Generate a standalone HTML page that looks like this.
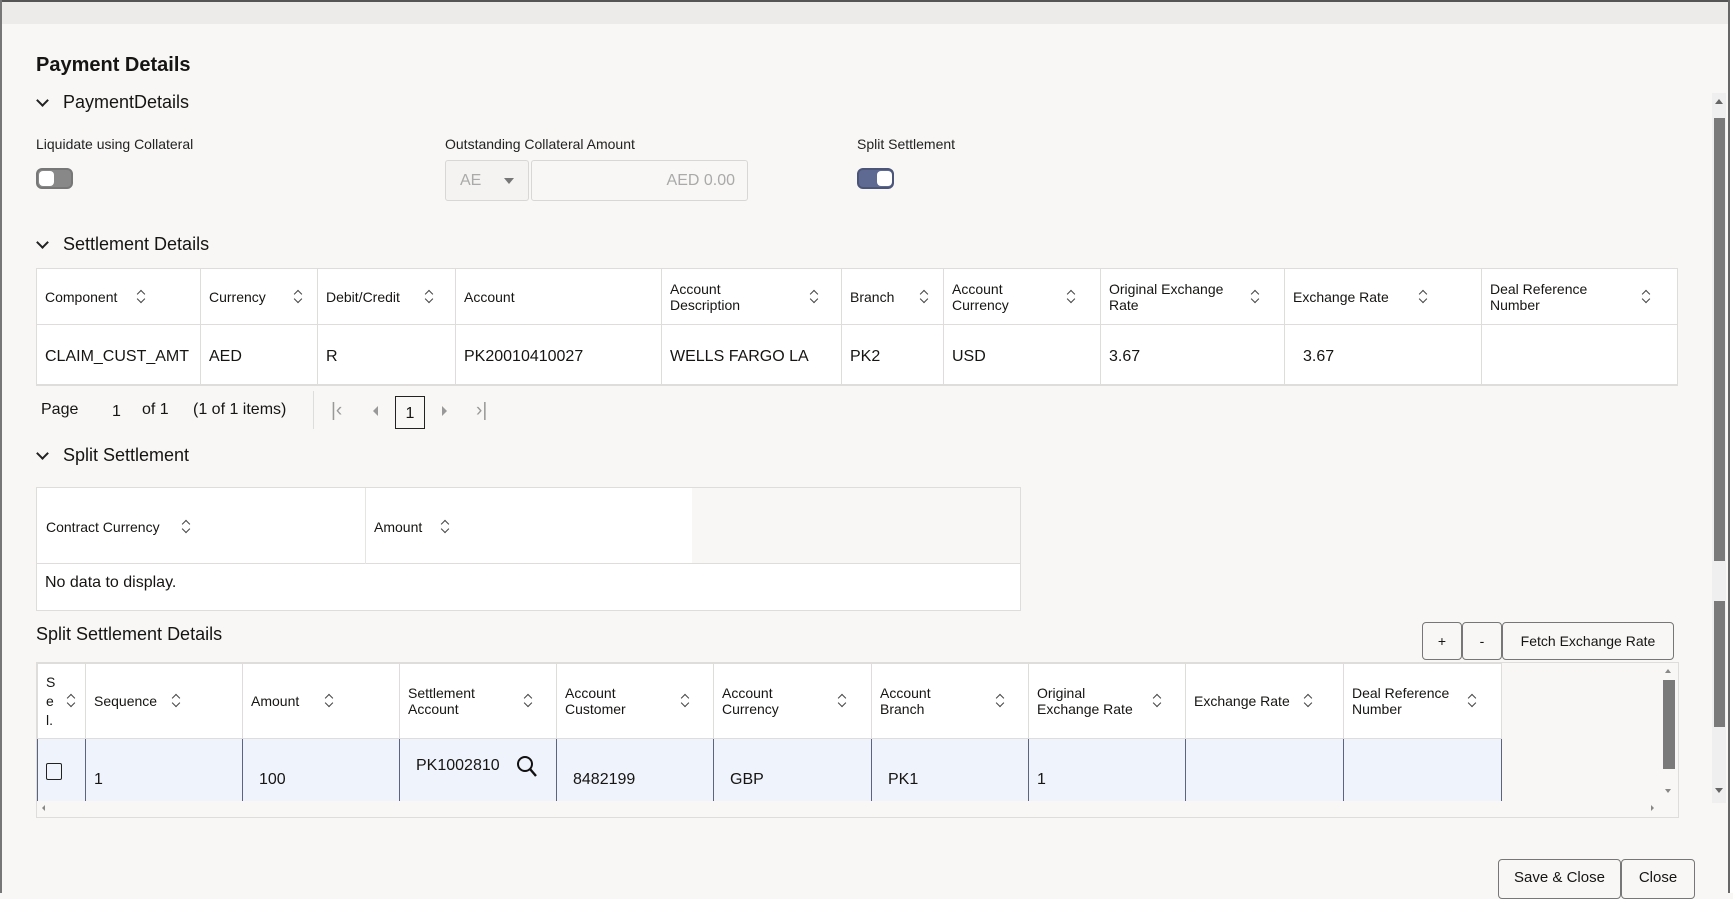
<!DOCTYPE html>
<html><head><meta charset="utf-8">
<style>
*{box-sizing:border-box;margin:0;padding:0}
body{width:1733px;height:893px;overflow:hidden;background:#f8f7f5;font-family:"Liberation Sans",sans-serif;color:#161513;position:relative}
.a{position:absolute;white-space:nowrap}
.top{left:0;top:0;width:1733px;height:24px;background:#ecebea;border-top:2px solid #555}
.lb{left:0;top:0;width:2px;height:893px;background:#777}
.rb{left:1728px;top:0;width:5px;height:893px;background:#fff;border-left:2px solid #666}
.h1{font-size:20px;font-weight:bold;left:36px;top:54px}
.sec{font-size:18px;left:63px}
.chev{left:38px;width:9px;height:9px;border-right:2px solid #222;border-bottom:2px solid #222;transform:rotate(45deg)}
.lab{font-size:14px;top:136px;color:#222}
.tog{width:37px;height:21px;border-radius:6px;border:2px solid #777;background:#888}
.tog i{position:absolute;left:1px;top:1px;width:15px;height:15px;background:#fff;border-radius:4px}
table{border-collapse:collapse;position:absolute;table-layout:fixed}
td,th{border:1px solid #dedddb;font-weight:normal;text-align:left;font-size:14px;vertical-align:middle;padding:0 8px;position:relative;background:#fff}
td{font-size:16px}
.s{display:inline-block;width:8px;height:12px;position:absolute;top:50%;margin-top:-7px}
.s:before,.s:after{content:"";position:absolute;left:1px;width:5px;height:5px;border-left:1.3px solid #444;border-top:1.3px solid #444}
.s:before{top:1px;transform:rotate(45deg)}
.s:after{top:6px;transform:rotate(225deg)}
.btn{border:1px solid #777;border-radius:4px;background:#f8f7f5;font-size:14px;text-align:center;height:38px;line-height:36px}
.dr td{background:#eff3fc;border-left:1px solid #5b6480;border-right:1px solid #5b6480;border-top:1px solid #dedddb;border-bottom:none}
</style></head><body>
<div class="a top"></div>
<div class="a lb"></div>
<div class="a rb"></div>
<div class="a" style="left:1712px;top:93px;width:14px;height:710px;background:#efefef"></div>
<div class="a" style="left:1714px;top:118px;width:11px;height:443px;background:#7a7a7a"></div>
<div class="a" style="left:1714px;top:601px;width:11px;height:126px;background:#7a7a7a"></div>
<div class="a" style="left:1715px;top:99px;border-left:4px solid transparent;border-right:4px solid transparent;border-bottom:5px solid #666"></div>
<div class="a" style="left:1715px;top:788px;border-left:4px solid transparent;border-right:4px solid transparent;border-top:5px solid #666"></div>

<div class="a h1">Payment Details</div>
<div class="a chev" style="top:96px"></div><div class="a sec" style="top:92px">PaymentDetails</div>
<div class="a lab" style="left:36px">Liquidate using Collateral</div>
<div class="a lab" style="left:445px">Outstanding Collateral Amount</div>
<div class="a lab" style="left:857px">Split Settlement</div>
<div class="a tog" style="left:36px;top:168px"><i></i></div>
<div class="a" style="left:445px;top:160px;width:84px;height:41px;border:1px solid #d8d7d5;border-radius:3px;background:#f4f3f1;font-size:16px;color:#aaa;line-height:39px;padding-left:14px">AE<span style="position:absolute;left:58px;top:17px;border-left:5px solid transparent;border-right:5px solid transparent;border-top:6px solid #777"></span></div>
<div class="a" style="left:531px;top:160px;width:217px;height:41px;border:1px solid #d8d7d5;border-radius:3px;background:#f8f7f5;font-size:16px;color:#aaa;line-height:39px;text-align:right;padding-right:12px">AED 0.00</div>
<div class="a tog" style="left:857px;top:168px;background:#5e6a91;border-color:#4a5578"><i style="left:18px"></i></div>

<div class="a chev" style="top:238px"></div><div class="a sec" style="top:234px">Settlement Details</div>
<table style="left:36px;top:268px;width:1641px">
<colgroup><col style="width:164px"><col style="width:117px"><col style="width:138px"><col style="width:206px"><col style="width:180px"><col style="width:102px"><col style="width:157px"><col style="width:184px"><col style="width:197px"><col style="width:196px"></colgroup>
<tr style="height:56px"><th>Component<span class="s" style="left:100px"></span></th><th>Currency<span class="s" style="left:93px"></span></th><th>Debit/Credit<span class="s" style="left:107px"></span></th><th>Account</th><th>Account<br>Description<span class="s" style="left:148px"></span></th><th>Branch<span class="s" style="left:78px"></span></th><th>Account<br>Currency<span class="s" style="left:123px"></span></th><th>Original Exchange<br>Rate<span class="s" style="left:150px"></span></th><th>Exchange Rate<span class="s" style="left:134px"></span></th><th>Deal Reference<br>Number<span class="s" style="left:160px"></span></th></tr>
<tr style="height:60px;border-bottom:2px solid #dedddb"><td style="padding-top:6px">CLAIM_CUST_AMT</td><td style="padding-top:6px">AED</td><td style="padding-top:6px">R</td><td style="padding-top:6px">PK20010410027</td><td style="padding-top:6px">WELLS FARGO LA</td><td style="padding-top:6px">PK2</td><td style="padding-top:6px">USD</td><td style="padding-top:6px">3.67</td><td style="padding:6px 0 0 18px">3.67</td><td></td></tr>
</table>
<div class="a" style="left:41px;top:401px;font-size:16px">Page</div>
<div class="a" style="left:112px;top:403px;font-size:16px">1</div>
<div class="a" style="left:142px;top:401px;font-size:16px">of 1</div>
<div class="a" style="left:193px;top:401px;font-size:16px">(1 of 1 items)</div>
<div class="a" style="left:313px;top:391px;width:1px;height:38px;background:#ddd"></div>
<div class="a" style="left:331px;top:400px;font-size:19px;color:#999">|&lsaquo;</div>
<div class="a" style="left:373px;top:406px;border-top:5px solid transparent;border-bottom:5px solid transparent;border-right:5px solid #999"></div>
<div class="a" style="left:395px;top:396px;width:30px;height:33px;border:1.5px solid #222;font-size:16px;text-align:center;line-height:34px">1</div>
<div class="a" style="left:442px;top:406px;border-top:5px solid transparent;border-bottom:5px solid transparent;border-left:5px solid #999"></div>
<div class="a" style="left:476px;top:400px;font-size:19px;color:#999">&rsaquo;|</div>

<div class="a chev" style="top:449px"></div><div class="a sec" style="top:445px">Split Settlement</div>
<div class="a" style="left:36px;top:487px;width:985px;height:124px;border:1px solid #dedddb;background:#fff"></div>
<div class="a" style="left:692px;top:488px;width:328px;height:76px;background:#f8f7f5"></div>
<div class="a" style="left:36px;top:563px;width:985px;height:1px;background:#dedddb"></div>
<div class="a" style="left:365px;top:488px;width:1px;height:76px;background:#e6e5e3"></div>
<div class="a" style="left:46px;top:519px;font-size:14px">Contract Currency</div><span class="s" style="left:182px;top:520px;margin:0"></span>
<div class="a" style="left:374px;top:519px;font-size:14px">Amount</div><span class="s" style="left:441px;top:520px;margin:0"></span>
<div class="a" style="left:45px;top:574px;font-size:16px">No data to display.</div>

<div class="a" style="left:36px;top:624px;font-size:18px">Split Settlement Details</div>
<div class="a btn" style="left:1422px;top:622px;width:40px">+</div>
<div class="a btn" style="left:1462px;top:622px;width:40px">-</div>
<div class="a btn" style="left:1502px;top:622px;width:172px">Fetch Exchange Rate</div>

<div class="a" style="left:36px;top:662px;width:1643px;height:156px;border:1px solid #dedddb;background:#f8f7f5"></div>
<table style="left:37px;top:663px;width:1464px">
<colgroup><col style="width:48px"><col style="width:157px"><col style="width:157px"><col style="width:157px"><col style="width:157px"><col style="width:158px"><col style="width:157px"><col style="width:157px"><col style="width:158px"><col style="width:158px"></colgroup>
<tr style="height:75px"><th style="line-height:19px">S<br>e<br>l.<span class="s" style="left:29px"></span></th><th>Sequence<span class="s" style="left:86px"></span></th><th>Amount<span class="s" style="left:82px"></span></th><th>Settlement<br>Account<span class="s" style="left:124px"></span></th><th>Account<br>Customer<span class="s" style="left:124px"></span></th><th>Account<br>Currency<span class="s" style="left:124px"></span></th><th>Account<br>Branch<span class="s" style="left:124px"></span></th><th>Original<br>Exchange Rate<span class="s" style="left:124px"></span></th><th>Exchange Rate<span class="s" style="left:118px"></span></th><th>Deal Reference<br>Number<span class="s" style="left:124px"></span></th></tr>
<tr class="dr" style="height:62px"><td style="padding-top:8px"><span style="display:inline-block;width:16px;height:17px;border:1.5px solid #222;border-radius:2px"></span></td><td style="padding-top:20px">1</td><td style="padding:20px 0 0 16px">100</td><td style="vertical-align:top;padding:18px 0 0 16px">PK1002810<svg style="position:absolute;left:116px;top:16px" width="22" height="24" viewBox="0 0 22 24"><circle cx="9" cy="9" r="7" fill="none" stroke="#111" stroke-width="2"/><path d="M14 14l6 7" stroke="#111" stroke-width="2.4"/></svg></td><td style="padding:20px 0 0 16px">8482199</td><td style="padding:20px 0 0 16px">GBP</td><td style="padding:20px 0 0 16px">PK1</td><td style="padding-top:20px">1</td><td></td><td></td></tr>
</table>
<div class="a" style="left:1663px;top:680px;width:12px;height:89px;background:#7a7a7a"></div>
<div class="a" style="left:1665px;top:669px;border-left:3px solid transparent;border-right:3px solid transparent;border-bottom:4px solid #888"></div>
<div class="a" style="left:1665px;top:789px;border-left:3px solid transparent;border-right:3px solid transparent;border-top:4px solid #888"></div>
<div class="a" style="left:42px;top:805px;border-top:3px solid transparent;border-bottom:3px solid transparent;border-right:3px solid #888"></div>
<div class="a" style="left:1651px;top:805px;border-top:3px solid transparent;border-bottom:3px solid transparent;border-left:3px solid #888"></div>

<div class="a btn" style="left:1498px;top:859px;width:123px;height:40px;font-size:15px">Save &amp; Close</div>
<div class="a btn" style="left:1621px;top:859px;width:74px;height:40px;font-size:15px">Close</div>
</body></html>
